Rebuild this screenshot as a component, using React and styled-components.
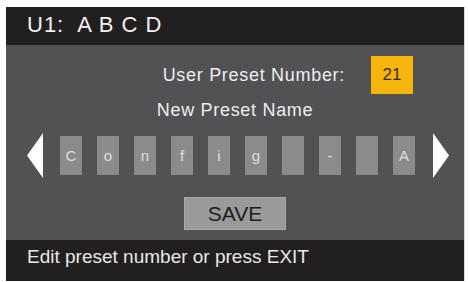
import { createGlobalStyle, styled } from 'styled-components'

const GlobalStyle = createGlobalStyle`
  html, body {
    margin: 0;
    padding: 0;
    background: #ffffff;
  }
  body {
    font-family: "Liberation Sans", Arial, sans-serif;
  }
`;

const Screen = styled.div`
  margin: 7px 0 0 6px;
  width: 458px;
  height: 274px;
  display: flex;
  flex-direction: column;
  background: #525254;
  box-shadow: 1px 0 0 #d8d8d8;
`;

const Header = styled.div`
  height: 38px;
  background: #221f20;
  color: #f2f2f2;
  display: flex;
  align-items: center;
  padding: 0 0 3px 21px;
  box-sizing: border-box;
  font-size: 22px;
  letter-spacing: 1px;
  white-space: pre;
`;

const Body = styled.div`
  flex: 1;
  display: flex;
  flex-direction: column;
  align-items: center;
  padding-top: 11px;
`;

const NumberRow = styled.div`
  align-self: stretch;
  display: flex;
  justify-content: flex-end;
  align-items: center;
  gap: 26px;
  padding-right: 51px;
  height: 38px;
`;

const Label = styled.span`
  color: #eeeeee;
  font-size: 18px;
  line-height: 20px;
  letter-spacing: 0.7px;
`;

const NumberBox = styled.div`
  width: 42px;
  height: 38px;
  background: #f5b50d;
  color: #3b2a05;
  font-size: 17px;
  display: flex;
  align-items: center;
  justify-content: center;
`;

const NameLabel = styled(Label)`
  margin-top: 6px;
`;

const CharRow = styled.div`
  align-self: stretch;
  display: flex;
  align-items: center;
  margin-top: 12px;
  height: 46px;
  padding-left: 21px;
`;

const Arrow = styled.svg`
  width: 16px;
  height: 45px;
  flex: none;
`;

const Chars = styled.div`
  display: flex;
  gap: 15px;
  margin: 0 18px 0 17px;
`;

const CharBox = styled.div`
  width: 22px;
  height: 39px;
  background: #8b8b8b;
  color: #dedede;
  font-size: 15px;
  display: flex;
  align-items: center;
  justify-content: center;
`;

const SaveButton = styled.div`
  margin-top: 19px;
  width: 102px;
  height: 33px;
  box-sizing: border-box;
  background: #9a9a9a;
  border: 1px solid #a8a8a8;
  color: #1e1e1e;
  font-size: 21px;
  display: flex;
  align-items: center;
  justify-content: center;
`;

const Footer = styled.div`
  height: 41px;
  background: #221f20;
  color: #e8e8e8;
  font-size: 19px;
  display: flex;
  align-items: center;
  padding: 0 0 8px 21px;
  box-sizing: border-box;
`;

const chars = ['C', 'o', 'n', 'f', 'i', 'g', '', '-', '', 'A'];

const App = () => {
  return (
    <>
      <GlobalStyle />
      <Screen>
        <Header>U1:  A B C D</Header>
        <Body>
          <NumberRow>
            <Label>User Preset Number:</Label>
            <NumberBox>21</NumberBox>
          </NumberRow>
          <NameLabel>New Preset Name</NameLabel>
          <CharRow>
            <Arrow viewBox="0 0 16 45">
              <polygon points="0,22.5 16,0 16,45" fill="#ffffff" />
            </Arrow>
            <Chars>
              {chars.map((c, i) => (
                <CharBox key={i}>{c}</CharBox>
              ))}
            </Chars>
            <Arrow viewBox="0 0 16 45">
              <polygon points="16,22.5 0,0 0,45" fill="#ffffff" />
            </Arrow>
          </CharRow>
          <SaveButton>SAVE</SaveButton>
        </Body>
        <Footer>Edit preset number or press EXIT</Footer>
      </Screen>
    </>
  )
}

export default App
